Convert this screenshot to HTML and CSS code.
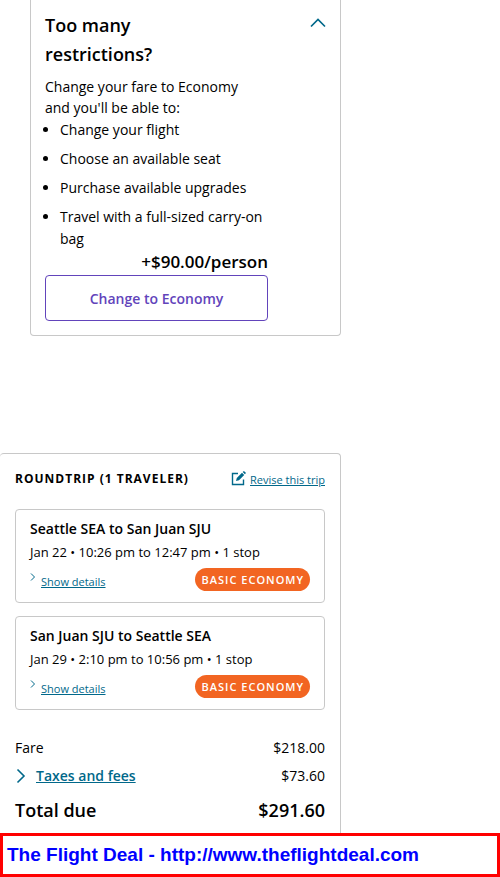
FILE: index.html
```html
<!DOCTYPE html>
<html lang="en">
<head>
    <meta charset="UTF-8">
    <meta name="viewport" content="width=device-width, initial-scale=1.0">
    <title>Trip Summary</title>
    <link rel="stylesheet" href="styles.css">
</head>
<body>
    <main class="summary">
        <section class="upsell">
            <div class="upsell-body">
                <h2>Too many restrictions?</h2>
                <p>Change your fare to Economy and you'll be able to:</p>
                <ul>
                    <li>Change your flight</li>
                    <li>Choose an available seat</li>
                    <li>Purchase available upgrades</li>
                    <li>Travel with a full-sized carry-on bag</li>
                </ul>
                <div class="upsell-price">+$90.00/person</div>
                <button type="button" class="change-button">Change to Economy</button>
            </div>
            <button type="button" class="collapse-button" aria-label="Collapse">
                <svg width="16" height="10" viewBox="0 0 16 10"><path d="M1 8.5 L8 1.5 L15 8.5" fill="none" stroke="#01688a" stroke-width="1.7"/></svg>
            </button>
        </section>

        <section class="trip">
            <div class="trip-header">
                <h3>Roundtrip (1 traveler)</h3>
                <a href="#" class="revise">
                    <svg width="15" height="15" viewBox="0 0 15 15">
                        <path d="M7 2.5 H1.5 V13.5 H12.5 V8.5" fill="none" stroke="#01688a" stroke-width="1.4"/>
                        <path d="M5 10 L5.8 7 L11 1.8 L13.2 4 L8 9.2 Z M11.7 1.1 L12.5 0.3 Q13 0 13.5 0.4 L14.6 1.5 Q15 2 14.6 2.5 L13.9 3.3 Z" fill="#01688a"/>
                    </svg>
                    <span>Revise this trip</span>
                </a>
            </div>

            <div class="flight">
                <h4>Seattle SEA to San Juan SJU</h4>
                <p>Jan 22 • 10:26 pm to 12:47 pm • 1 stop</p>
                <div class="flight-footer">
                    <a href="#" class="details">
                        <svg width="6" height="8" viewBox="0 0 6 8"><path d="M1 0.5 L4.5 4 L1 7.5" fill="none" stroke="#01688a"/></svg>
                        <span>Show details</span>
                    </a>
                    <span class="badge">Basic Economy</span>
                </div>
            </div>

            <div class="flight">
                <h4>San Juan SJU to Seattle SEA</h4>
                <p>Jan 29 • 2:10 pm to 10:56 pm • 1 stop</p>
                <div class="flight-footer">
                    <a href="#" class="details">
                        <svg width="6" height="8" viewBox="0 0 6 8"><path d="M1 0.5 L4.5 4 L1 7.5" fill="none" stroke="#01688a"/></svg>
                        <span>Show details</span>
                    </a>
                    <span class="badge">Basic Economy</span>
                </div>
            </div>

            <dl class="costs">
                <div class="cost-row">
                    <dt>Fare</dt>
                    <dd>$218.00</dd>
                </div>
                <div class="cost-row">
                    <dt>
                        <a href="#" class="taxes">
                            <svg width="10" height="16" viewBox="0 0 10 16"><path d="M1.5 1.5 L8 8 L1.5 14.5" fill="none" stroke="#01688a" stroke-width="1.6"/></svg>
                            <span>Taxes and fees</span>
                        </a>
                    </dt>
                    <dd>$73.60</dd>
                </div>
                <div class="cost-row total">
                    <dt>Total due</dt>
                    <dd>$291.60</dd>
                </div>
            </dl>
        </section>
    </main>

    <footer class="site-banner">The Flight Deal - http://www.theflightdeal.com</footer>
</body>
</html>
```
FILE: styles.css
```css
* {
    box-sizing: border-box;
}

body {
    margin: 0;
    background: #fff;
    color: #000;
    font-family: "Open Sans", Arial, sans-serif;
    font-size: 14px;
}

h2, h3, h4, p, ul, dl, dd {
    margin: 0;
}

a {
    color: #01688a;
}

svg {
    display: block;
    flex: none;
}

.summary {
    max-width: 341px;
}

.upsell {
    display: flex;
    justify-content: space-between;
    align-items: flex-start;
    margin: 0 0 117px 30px;
    padding: 11px 14px 14px;
    border: 1px solid #c8c8c8;
    border-top: 0;
    border-radius: 0 0 4px 4px;
}

.upsell-body {
    flex: 0 1 223px;
}

.upsell h2 {
    max-width: 160px;
    margin-bottom: 7px;
    font-size: 18px;
    font-weight: 600;
    line-height: 29px;
}

.upsell p {
    max-width: 210px;
    line-height: 21px;
}

.upsell ul {
    display: grid;
    gap: 7px;
    padding: 1px 0 0 15px;
}

.upsell li {
    line-height: 22px;
}

.upsell-price {
    padding-bottom: 1px;
    font-size: 17px;
    font-weight: 600;
    line-height: 24px;
    text-align: right;
}

.change-button {
    width: 100%;
    height: 46px;
    border: 1px solid #6244bb;
    border-radius: 4px;
    background: #fff;
    color: #6244bb;
    font-family: inherit;
    font-size: 14px;
    font-weight: 600;
    cursor: pointer;
}

.collapse-button {
    margin-top: 7px;
    padding: 0;
    border: 0;
    background: none;
    cursor: pointer;
}

.trip {
    padding: 14px 15px 7px;
    border: 1px solid #c8c8c8;
    border-width: 1px 1px 0 0;
    border-radius: 4px 4px 0 0;
}

.trip-header {
    display: flex;
    justify-content: space-between;
    align-items: center;
    margin-bottom: 19px;
}

.trip h3 {
    font-size: 12px;
    font-weight: 700;
    line-height: 22px;
    letter-spacing: 1px;
    text-transform: uppercase;
}

.revise {
    display: flex;
    gap: 4px;
    padding-top: 2px;
    font-size: 11px;
    line-height: 18px;
}

.flight {
    margin-bottom: 13px;
    padding: 8px 14px 11px;
    border: 1px solid #c8c8c8;
    border-radius: 4px;
}

.flight h4 {
    font-size: 14px;
    font-weight: 600;
    line-height: 22px;
}

.flight p {
    margin-bottom: 4px;
    font-size: 13px;
    line-height: 24px;
}

.flight-footer {
    display: flex;
    justify-content: space-between;
    align-items: center;
}

.details {
    display: flex;
    gap: 5px;
    padding-top: 4px;
    font-size: 11px;
    line-height: 18px;
}

.badge {
    padding: 0 6px 0 7px;
    border-radius: 12px;
    background: #f26522;
    color: #fff;
    font-size: 11px;
    font-weight: 600;
    line-height: 23px;
    letter-spacing: 1px;
    text-transform: uppercase;
}

.costs {
    padding-top: 11px;
}

.cost-row {
    display: flex;
    justify-content: space-between;
    align-items: center;
    line-height: 28px;
}

.taxes {
    display: flex;
    align-items: center;
    gap: 10px;
    padding-left: 1px;
    font-weight: 600;
}

.total {
    padding-top: 4px;
    font-size: 18px;
    font-weight: 600;
    line-height: 32px;
}

.site-banner {
    padding: 5px 4px;
    border: 3px solid #f00;
    color: #00f;
    font-family: "Liberation Sans", Arial, sans-serif;
    font-size: 19px;
    font-weight: bold;
    line-height: 28px;
}
```
